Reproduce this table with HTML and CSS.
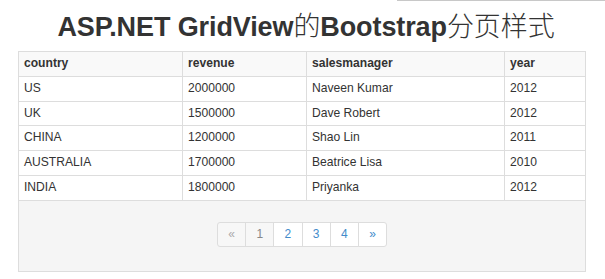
FILE: index.html
```html
<!DOCTYPE html>
<html lang="zh-CN">
<head>
<meta charset="utf-8">
<title>ASP.NET GridView的Bootstrap分页样式</title>
<link rel="stylesheet" href="styles.css">
</head>
<body>
<div class="topline"></div>
<div class="page">
  <h1 class="title">ASP.NET GridView<span class="cjk">的</span>Bootstrap<span class="cjk">分页样式</span></h1>
  <table class="grid">
    <colgroup>
      <col class="c-country">
      <col class="c-revenue">
      <col class="c-manager">
      <col class="c-year">
    </colgroup>
    <thead>
      <tr><th>country</th><th>revenue</th><th>salesmanager</th><th>year</th></tr>
    </thead>
    <tbody>
      <tr><td>US</td><td>2000000</td><td>Naveen Kumar</td><td>2012</td></tr>
      <tr><td>UK</td><td>1500000</td><td>Dave Robert</td><td>2012</td></tr>
      <tr><td>CHINA</td><td>1200000</td><td>Shao Lin</td><td>2011</td></tr>
      <tr><td>AUSTRALIA</td><td>1700000</td><td>Beatrice Lisa</td><td>2010</td></tr>
      <tr><td>INDIA</td><td>1800000</td><td>Priyanka</td><td>2012</td></tr>
    </tbody>
    <tfoot>
      <tr>
        <td colspan="4" class="pager-cell">
          <ul class="pagination">
            <li class="disabled"><span>&laquo;</span></li>
            <li class="current"><span>1</span></li>
            <li><a href="#">2</a></li>
            <li><a href="#">3</a></li>
            <li><a href="#">4</a></li>
            <li><a href="#">&raquo;</a></li>
          </ul>
        </td>
      </tr>
    </tfoot>
  </table>
</div>
</body>
</html>
```

FILE: styles.css
```css
html, body {
  margin: 0;
  padding: 0;
  background: #fff;
}

body {
  font-family: "Liberation Sans", Arial, "Noto Sans CJK SC", sans-serif;
  font-size: 12.1px;
  color: #333;
  position: relative;
  height: 279px;
  overflow: hidden;
}

.topline {
  position: absolute;
  top: 0;
  left: 397px;
  right: 0;
  height: 1px;
  background: #c8c8c8;
}

.page {
  padding: 0 20px 0 18px;
}

.title {
  margin: 0;
  padding: 10px 0 0 9px;
  height: 51px;
  box-sizing: border-box;
  text-align: center;
  font-size: 27px;
  line-height: 35px;
  font-weight: bold;
  color: #333;
  letter-spacing: -0.1px;
  white-space: nowrap;
}

.title .cjk {
  font-family: "Noto Sans CJK SC", sans-serif;
  font-weight: 300;
  line-height: 1;
}

.grid {
  width: 567px;
  border-collapse: collapse;
  border: 1px solid #ddd;
  table-layout: fixed;
}

.c-country { width: 164px; }
.c-revenue { width: 124px; }
.c-manager { width: 198px; }
.c-year { width: 81px; }

.grid th,
.grid td {
  border: 1px solid #ddd;
  padding: 4px 5px;
  line-height: 15.8px;
  text-align: left;
  vertical-align: top;
  white-space: nowrap;
}

.grid thead th {
  font-weight: bold;
  background: #f9f9f9;
}

.grid tbody td {
  background: #fff;
}

.grid .pager-cell {
  background: #f5f5f5;
  text-align: center;
  padding: 21px 0 24px;
  height: 25px;
}

.pagination {
  display: inline-flex;
  list-style: none;
  margin: 0;
  padding: 0;
  border-radius: 3px;
  vertical-align: top;
}

.pagination li span,
.pagination li a {
  display: block;
  box-sizing: border-box;
  width: 29.2px;
  height: 25px;
  line-height: 23px;
  margin-left: -1px;
  border: 1px solid #ddd;
  background: #fff;
  color: #428bca;
  text-decoration: none;
  text-align: center;
  font-size: 12px;
}

.pagination li:first-child span {
  margin-left: 0;
  border-radius: 3px 0 0 3px;
}

.pagination li:last-child a {
  border-radius: 0 3px 3px 0;
}

.pagination .disabled span {
  color: #aaa;
  background: #f7f7f7;
}

.pagination .current span {
  color: #888;
  background: #f7f7f7;
}
```
